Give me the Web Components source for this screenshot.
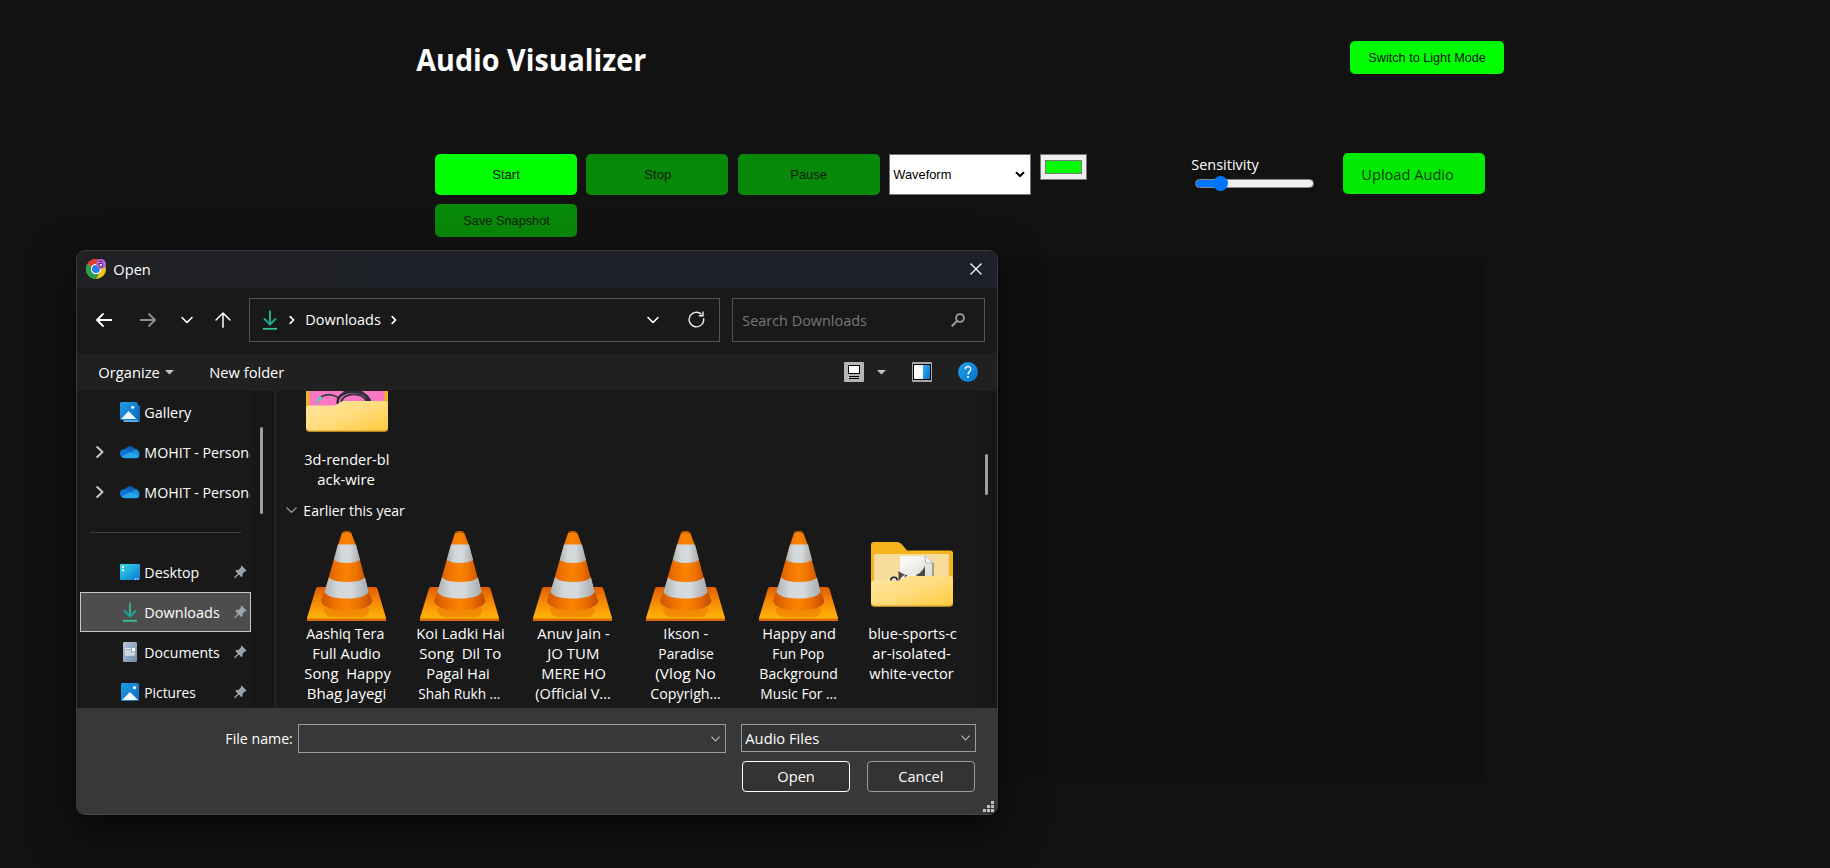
<!DOCTYPE html>
<html lang="en">
<head>
<meta charset="utf-8">
<title>Audio Visualizer</title>
<style>
html,body{margin:0;height:868px;overflow:hidden;background:#121212}
body{font-family:"Open Sans","Noto Sans",sans-serif;color:#fff;position:relative}
</style>
</head>
<body>
<visualizer-page></visualizer-page>
<open-dialog></open-dialog>
<script>
const define=(name,css,html,setup)=>{
  customElements.define(name,class extends HTMLElement{
    connectedCallback(){
      if(this.shadowRoot)return;
      const root=this.attachShadow({mode:'open'});
      root.innerHTML='<style>:host,*{box-sizing:border-box}'+css+'</style>'+(typeof html==='function'?html(this):html);
      if(setup)setup(this,root);
    }
  });
};

/* Text set to an exact width in pixels (w). */
const fitters=[];
define('fit-text',
  ':host{display:inline-block;white-space:pre;line-height:20px;flex:none;text-align:left}span{display:inline-block;transform-origin:0 50%}',
  '<span><slot></slot></span>',
  (el,root)=>{
    fitters.push(()=>{
      const s=root.querySelector('span'),w=+el.getAttribute('w'),nat=s.getBoundingClientRect().width;
      if(!nat||!w)return;
      el.style.width=w+'px';
      s.style.transform='scaleX('+(w+1.5)/nat+') translateX(-.7px)';
    });
  });

const stroke=(d,c,w,x='')=>`<path d="${d}" fill="none" stroke="${c}" stroke-width="${w}" ${x}/>`;
const round='stroke-linecap="round" stroke-linejoin="round"';
const folder=(inner)=>`
<defs><linearGradient id="f" x1="0" y1="0" x2="1" y2="1"><stop offset="0" stop-color="#ffe6a0"/><stop offset=".5" stop-color="#ffdc7c"/><stop offset="1" stop-color="#ffc93a"/></linearGradient>
<linearGradient id="p" x1="0" y1="0" x2="1" y2="1"><stop offset="0" stop-color="#fff"/><stop offset="1" stop-color="#d5d5cf"/></linearGradient></defs>
<path d="M0 3a3 3 0 0 1 3-3H26q3 0 5 2.500L36 8.500H79a3 3 0 0 1 3 3V61H0z" fill="#f5b31c"/>${inner}
<path d="M0 41.500a3 3 0 0 1 3-3H27q3 0 5.500-2l2-1.500q2-1 4-1H79a3 3 0 0 1 3 3V61.500a3 3 0 0 1-3 3H3a3 3 0 0 1-3-3z" fill="url(#f)"/>
<path d="M.5 61.500a3 3 0 0 0 2.500 2.500H79a3 3 0 0 0 2.500-2.500" fill="none" stroke="#d99a1c" stroke-width="1"/>`;
const dl=stroke('M7 .5V14','#2fb98a',1.8)+stroke('M1.500 9 7 14.500 12.500 9','#19a99a',1.900,round)+stroke('M0 18.800H14','#34c48d',1.800);
const picture=`<defs><linearGradient id="g" x1="0" y1="0" x2="1" y2="1"><stop offset="0" stop-color="#1d9fe6"/><stop offset="1" stop-color="#0f69c4"/></linearGradient></defs>`;
const ICONS={
chrome:[20,20,`<circle cx="10" cy="10" r="10" fill="#fbc116"/><path d="M10 10 1.340 5A10 10 0 0 1 18.660 5H10z" fill="#e33b2e"/><path d="M10 10 1.340 5A10 10 0 0 0 10 20L14.330 12.500z" fill="#2a9e4b"/><path d="M10 5H18.660L16 9z" fill="#e33b2e"/><circle cx="10" cy="10" r="5.200" fill="#fff"/><circle cx="10" cy="10" r="4" fill="#2b7de9"/><circle cx="15" cy="5" r="5" fill="#b565dd"/><path d="M13.300 2.300h3M13 4.500h3.500v3.300h-3z" fill="#fff" fill-opacity=".75" stroke="#4b3157" stroke-width="1"/>`],
close:[12,12,stroke('M.5.5 11.500 11.500M11.500.5.5 11.500','#fff',1.200)],
back:[16,14,stroke('M15.300 7H1.500M7 1 1 7 7 13','#fff',1.800,round)],
forward:[16,14,stroke('M.7 7H14.500M9 1 15 7 9 13','#8f8f8f',1.800,round)],
down:[12,8,stroke('M1 1.500 6 6.500 11 1.500','#fff',1.600,round)],
up:[16,16,stroke('M8 15.300V1.200M1 8 8 1 15 8','#fff',1.500,round)],
dl:[14,20,dl],
right:[6,10,stroke('M1.200 1.600 4.600 5 1.200 8.400','#fff',1.700,round)],
expand:[8,12,stroke('M1.200 1 6.500 6 1.200 11','#c8c8c8',2,round)],
refresh:[17,17,stroke('M13.500 3.300A7.300 7.300 0 1 0 15.600 7.300','#eee',1.400)+stroke('M15 .5V4.700H10.800','#eee',1.400)],
search:[14,14,`<circle cx="9" cy="5" r="3.900" fill="none" stroke="#a0a0a0" stroke-width="1.800"/>`+stroke('M6 8 .8 13.200','#a0a0a0',2)],
tri:[9,5,`<path d="M0 0H9L4.500 4.500z" fill="#c4c4c4"/>`],
view:[20,20,`<rect width="20" height="20" rx="1" fill="#b5b5b5"/><rect x="4.500" y="3.500" width="11" height="8" fill="#fff" stroke="#000"/><path d="M5 14.500H15M5 16.500H15" stroke="#000"/>`],
pane:[20,20,`<defs><linearGradient id="g" x1="0" y1="0" x2="1" y2="1"><stop offset="0" stop-color="#2cb0f0"/><stop offset="1" stop-color="#0a73cf"/></linearGradient></defs><rect width="20" height="20" rx="1" fill="#a8a8a8"/><rect x="1.500" y="2.500" width="17" height="15" fill="#fff" stroke="#000"/><rect x="11" y="3" width="7" height="14" fill="url(#g)"/>`],
help:[20,20,`<defs><linearGradient id="g" x1="0" y1="0" x2="1" y2="1"><stop offset="0" stop-color="#22a4ee"/><stop offset="1" stop-color="#0470cd"/></linearGradient></defs><circle cx="10" cy="10" r="10" fill="url(#g)"/>`+stroke('M7.300 7.200a2.700 2.700 0 1 1 4.600 1.900C10.600 10.200 10 10.700 10 12.500','#fff',1.400)+`<circle cx="10" cy="15" r="1" fill="#fff"/>`],
gallery:[20,20,picture+`<rect x="3" y="3" width="17" height="17" rx="1.500" fill="#1467b8"/><path d="M3.500 18.300H18V20H5q-1.500 0-1.500-1.700z" fill="#6fb3ea"/><rect width="17.600" height="18" rx="1.500" fill="url(#g)"/><path d="M1 17 8.500 9 16.500 17z" fill="#e9f5ff"/><circle cx="12.700" cy="5.300" r="1.500" fill="#fff"/>`],
pictures:[18,18,picture+`<rect width="18" height="18" rx="1.500" fill="url(#g)"/><path d="M1 17 9 9 17 17z" fill="#f4faff"/><circle cx="13.500" cy="4.700" r="1.600" fill="#fff"/>`],
cloud:[20,14,`<path d="M4.500 4.500A6.500 6.500 0 0 1 15.500 4L11 9z" fill="#0a5db0"/><path d="M4 13A4.200 4.200 0 0 1 4.500 4.200Q7 3.500 9 5L15 9 6 13z" fill="#0f74cf"/><path d="M12 7Q13.500 4 16 4.200A4.300 4.300 0 0 1 18 11.500z" fill="#1b8ddf"/><path d="M3.500 13Q1.500 12.500 1.500 11.500L11 6.800 19.500 10.500Q19 13 16.500 13.200H4.500z" fill="#26a4ec"/>`],
desktop:[20,16,`<defs><linearGradient id="g" x1="0" y1="0" x2="1" y2="1"><stop offset="0" stop-color="#35dbe8"/><stop offset="1" stop-color="#0b74d0"/></linearGradient></defs><rect width="20" height="16" rx="1.200" fill="url(#g)"/><path d="M2 2h2v2h-2zM2 5.300h2v2h-2zM15 14.500h1.200v1.200h-1.200zM17 14.500h1.200v1.200h-1.200z" fill="#fff"/>`],
documents:[14,20,`<defs><linearGradient id="g" x1="0" y1="0" x2="1" y2="1"><stop offset="0" stop-color="#b4c5d8"/><stop offset="1" stop-color="#6f8cab"/></linearGradient></defs><rect width="14" height="20" rx="1.200" fill="url(#g)"/><path d="M2 6.700H8M2 9.200H8M2 11.200H12" stroke="#fff" stroke-width="1"/><path d="M9 6h3v3.500h-3z" fill="#fff"/><path d="M2 13H12" stroke="#fff" stroke-width="1"/>`],
pin:[13,14,`<path d="M7.500.5 12.500 5.500 11.500 6.500 10.800 6.300 8.700 8.700 8.500 11.200 7.500 12.300 4.800 9.500 1 13.300.3 13 .3 12.300 3.800 8.500 1.200 5.900 2.200 4.900 4.800 4.700 7 2.400 6.700 1.500z" fill="#9aa4ab"/>`],
group:[11,6,stroke('M.5.500 5.500 5.300 10.500.5','#9a9a9a',1.200)],
combo:[9,6,stroke('M.5.700 4.500 5 8.500.7','#c4c4c4',1.100)],
grip:[11,11,`<path d="M8 0h3v3h-3zM8 4h3v3h-3zM4 4h3v3h-3zM8 8h3v3h-3zM4 8h3v3h-3zM0 8h3v3h-3z" fill="#c2c2c2"/>`],
cone:[79,90,`<defs><linearGradient id="o" x1="0" x2="1"><stop offset="0" stop-color="#cf5400"/><stop offset=".28" stop-color="#f07300"/><stop offset=".5" stop-color="#fa8302"/><stop offset=".7" stop-color="#ef7400"/><stop offset="1" stop-color="#c24b00"/></linearGradient>
<linearGradient id="w" x1="0" x2="1"><stop offset="0" stop-color="#a2a7a9"/><stop offset=".3" stop-color="#cdd3d5"/><stop offset=".6" stop-color="#d0d5d8"/><stop offset="1" stop-color="#9ca0a2"/></linearGradient>
<pattern id="d" width="2" height="2" patternUnits="userSpaceOnUse"><path d="M0 0h1v1h-1zM1 1h1v1h-1z" fill="#fff" opacity=".22"/></pattern>
<linearGradient id="b" x1="0" y1="0" x2="0" y2="1"><stop offset="0" stop-color="#e05c00"/><stop offset=".45" stop-color="#f68b05"/><stop offset="1" stop-color="#ffbb08"/></linearGradient></defs>
<path d="M11 56H68Q70 56 70.500 58L79 87V89Q79 90 78 90H1Q0 90 0 89V87L8.800 58Q9.300 56 11 56z" fill="url(#b)"/>
<path d="M0 87.500H79V89Q79 90 78 90H1Q0 90 0 89z" fill="#e06a05"/>
<path d="M17 77H62Q63 84 56 86H24Q17 85 17 77z" fill="#ee7d05" opacity=".65"/>
<path d="M17.500 60 14 70Q16 79 39.500 79.500 63 79 65.500 70L61.500 60z" fill="url(#o)"/>
<path d="M35 2Q35.500 0 39.500 0T44.300 2L49 14.500 61.500 61Q58 67.500 39.500 67.500 21 67.500 17.500 61L31 14z" fill="url(#o)"/>
<path id="u" d="M31 13.500H49L53 29Q49 32 40 32 31 32 26.800 29z" fill="url(#w)"/><path d="M31 13.500H49L53 29Q49 32 40 32 31 32 26.800 29z" fill="url(#d)"/>
<path d="M22 46.500Q27 51 40 51 53 51 58 46.500L61.700 61Q58 67.500 39.500 67.500 21 67.500 17.300 61z" fill="url(#w)"/><path d="M22 46.500Q27 51 40 51 53 51 58 46.500L61.700 61Q58 67.500 39.500 67.500 21 67.500 17.300 61z" fill="url(#d)"/>
<path d="M35.500 2Q39.500-.5 44 2" fill="none" stroke="#9e4a0c" stroke-width="1.200"/>`],
folderWire:[82,65,folder(`<rect x="3.500" y="-2" width="75" height="50" fill="#f977c3"/><path d="M15 30Q20 26.500 26 28T32 31.500" fill="none" stroke="#32383e" stroke-width="1.800"/><path d="M10 37 13 33" stroke="#9aa3a3" stroke-width="2.500"/><path d="M12.500 33.500 15 30" stroke="#58d0b8" stroke-width="3.200"/><path d="M32 37C30 29 39 24 49 25 59 25.500 64 31 65 38" fill="none" stroke="#2b2932" stroke-width="2.400"/><path d="M35 37C35 29 44 26.500 51 27.500 58 28.500 61 33 61.500 38M37 26Q46 20 55 24.500 61 28 62.500 36" fill="none" stroke="#33323b" stroke-width="2"/>`)],
folderCar:[82,65,folder(`<path d="M3 13a1 1 0 0 1 1-1H78V40H3z" fill="#f7dc9c"/><path d="M29 14H56L62 20V40H29z" fill="url(#p)"/><path d="M54 14 62 21H54.500z" fill="#fbfbfb" stroke="#aaa79d" stroke-width=".8"/><path d="M62 21v19" stroke="#8e897c" stroke-width="1.500"/><path d="M27.500 29Q34 34 41 34 50 33 54 24V40H27.500z" fill="#4b493f"/><circle cx="23" cy="38.500" r="3.200" fill="#ddd" stroke="#1e1e1e" stroke-width="1.500"/><path d="M28 40Q30 34 34 33L33 40z" fill="#eee"/><ellipse cx="41" cy="37" rx="7" ry="4.500" fill="#f6f6f6"/>`)]
};
define('ui-icon',':host{display:block;flex:none}svg{display:block;overflow:visible}',el=>{
  const [w,h,body]=ICONS[el.getAttribute('name')];
  return `<svg width="${w}" height="${h}" viewBox="0 0 ${w} ${h}">${body}</svg>`;
});

define('green-button',`:host{display:flex;align-items:center;justify-content:center;height:33px;border-radius:5px;background:#0f0;color:#121212;font:13.333px/20px "Liberation Sans",Arial,sans-serif}
:host([tall]){height:41px}:host([off]){background:#098909;color:#111c11}
:host([upload]){background:#02ea02;color:#083c0c;font:15px/20px "Open Sans",sans-serif;justify-content:flex-start;padding-left:19px;margin-top:-1px}`,'<slot></slot>');

define('control-grid',`:host{display:grid;grid-template-columns:repeat(7,142px);column-gap:9.350px;row-gap:9px;align-items:start}
.select{height:41px;border:1px solid #767676;background:#fff;color:#000;display:flex;align-items:center;justify-content:space-between;padding:0 5px 0 3.500px;font:13.333px/20px "Liberation Sans",Arial,sans-serif}
.swatch{width:47px;height:26px;border:1px solid #767676;background:#efefef;padding:5px 4px}.swatch i{display:block;height:14px;background:#0f0;border:1px solid #777}
.sens{font-size:14.500px;display:flex;flex-direction:column;padding-top:1px}
.track{margin:4px 0 0 3px;width:119px;height:9px;border-radius:5px;border:1px solid #8b8b8b;background:linear-gradient(90deg,#0075ff 26px,#efefef 26px);display:flex;align-items:center}
.track i{display:block;flex:none;width:15px;height:15px;border-radius:50%;background:#0075ff;margin-left:17.500px}`,
`<green-button tall><fit-text w="26">Start</fit-text></green-button>
<green-button tall off><fit-text w="25.500">Stop</fit-text></green-button>
<green-button tall off><fit-text w="35">Pause</fit-text></green-button>
<div class="select"><fit-text w="56.500">Waveform</fit-text><svg width="10" height="7" viewBox="0 0 10 7"><path d="M1 1.200 5 5 9 1.200" fill="none" stroke="#000" stroke-width="2"/></svg></div>
<div class="swatch"><i></i></div>
<div class="sens"><fit-text w="66">Sensitivity</fit-text><div class="track"><i></i></div></div>
<green-button tall upload><fit-text w="91">Upload Audio</fit-text></green-button>
<green-button off><fit-text w="85">Save Snapshot</fit-text></green-button>`);

define('visualizer-page',`:host{display:block;height:868px;padding:41px 326px 0 417px}
header{display:flex;justify-content:space-between;align-items:flex-start;height:113px}
h1{margin:-1px 0 0;font-size:29.500px;font-weight:700;line-height:40px}h1 fit-text{line-height:40px}
green-button.mode{width:154px}control-grid{margin-left:18px}
.canvas{margin:20px 19px 0 18px;height:523px;background:#101010}`,
`<header><h1><fit-text w="228.500">Audio Visualizer</fit-text></h1><green-button class="mode"><fit-text w="116">Switch to Light Mode</fit-text></green-button></header>
<control-grid></control-grid><div class="canvas"></div>`);

define('title-bar',':host{display:flex;align-items:center;height:37px;padding:0 15px 2px 9px;background:linear-gradient(90deg,#202124,#1e2129 45%)}fit-text{margin:1px auto 0 7.500px}',
'<ui-icon name="chrome"></ui-icon><fit-text w="36">Open</fit-text><ui-icon name="close"></ui-icon>');

define('nav-bar',`:host{display:flex;height:65px;padding:10px 12px 11px 19px;align-items:center}
.box{height:44px;border:1px solid #535353;display:flex;align-items:center}
.path{width:471px;margin:0 12px 0 18.500px;padding:0 14px 1px 13px}.path fit-text{margin-top:-1px}.find{width:253px;padding:0 19px 0 9.500px;justify-content:space-between;color:#787878}`,
`<ui-icon name="back"></ui-icon><ui-icon name="forward" style="margin-left:28px"></ui-icon><ui-icon name="down" style="margin:-1px 0 0 24.500px"></ui-icon><ui-icon name="up" style="margin-left:22px"></ui-icon>
<div class="box path"><ui-icon name="dl"></ui-icon><ui-icon name="right" style="margin:0 11px 0 12px"></ui-icon><fit-text w="74">Downloads</fit-text><ui-icon name="right" style="margin-left:11px"></ui-icon><ui-icon name="down" style="margin:0 29px 0 auto"></ui-icon><ui-icon name="refresh"></ui-icon></div>
<div class="box find"><fit-text w="123">Search Downloads</fit-text><ui-icon name="search"></ui-icon></div>`);

define('command-bar',':host{display:flex;align-items:center;height:38px;padding:0 19px 0 22px;background:#202020}',
`<fit-text w="60">Organize</fit-text><ui-icon name="tri" style="margin:0 35.500px 0 6px"></ui-icon><fit-text w="73.500">New folder</fit-text>
<ui-icon name="view" style="margin-left:auto"></ui-icon><ui-icon name="tri" style="margin:0 26px 0 13px"></ui-icon><ui-icon name="pane"></ui-icon><ui-icon name="help" style="margin-left:26px"></ui-icon>`);

define('side-item',`:host{display:flex;align-items:center;height:40px;width:171px;overflow:hidden;border:1px solid transparent}
:host([selected]){background:#4d4d4d;border-color:#c8c8c8}
.ex{width:8px;margin-left:14.500px;flex:none}.ic{width:20px;margin:0 5px 0 16px;flex:none;display:flex;justify-content:center}ui-icon.pin{margin:0 3px 0 auto}.t{flex:1;display:flex;align-items:center;height:24px;min-width:0}`,
el=>`<div class="ex">${el.hasAttribute('expand')?'<ui-icon name="expand"></ui-icon>':''}</div><div class="ic"><ui-icon name="${el.getAttribute('icon')}"></ui-icon></div><div class="t"><fit-text w="${el.getAttribute('w')}">${el.getAttribute('label')}</fit-text>${el.hasAttribute('pin')?'<ui-icon class="pin" name="pin"></ui-icon>':''}</div>`);

define('side-pane',`:host{display:flex;width:197px;flex:none;padding-left:3px;overflow:hidden;border-right:1px solid #131313}
.list{width:171px;margin-top:1px}hr{border:0;height:1px;background:#3e3e3e;margin:20px 10px 19px}
.bar{flex:1;background:#171717;padding:36px 0 0 9px}.bar i{display:block;width:3px;height:87px;border-radius:2px;background:#9f9f9f}`,
`<div class="list"><side-item icon="gallery" label="Gallery" w="45.500"></side-item><side-item expand icon="cloud" label="MOHIT - Persona" w="111"></side-item><side-item expand icon="cloud" label="MOHIT - Persona" w="111"></side-item><hr>
<side-item pin icon="desktop" label="Desktop" w="53.500"></side-item><side-item pin selected icon="dl" label="Downloads" w="74"></side-item><side-item pin icon="documents" label="Documents" w="74"></side-item><side-item pin icon="pictures" label="Pictures" w="50"></side-item></div><div class="bar"><i></i></div>`);

define('file-tile',':host{display:flex;flex-direction:column;align-items:center;width:113px;flex:none}.ic{height:92px;display:flex;align-items:flex-start}',
el=>`<div class="ic"><ui-icon name="${el.getAttribute('icon')}" style="margin-top:${el.getAttribute('icon')==='cone'?0:10.500}px"></ui-icon></div>`+
el.getAttribute('lines').split('|').map(l=>{const [t,w,dx]=l.split('~');return `<fit-text w="${w}" style="margin-left:${dx||0}px">${t}</fit-text>`}).join(''));

define('file-pane',`:host{display:flex;flex:1;overflow:hidden;border-left:3px solid #212121}
.files{width:700px;height:317px;overflow:hidden;display:flex;flex-direction:column}
.row{display:flex;padding-left:13px}.row.one{margin-top:-34.500px;height:140px;flex:none}
.group{display:flex;align-items:center;height:20px;padding-left:9px;margin-top:3.500px;flex:none}.group fit-text{margin-left:6.500px}
.row.two{margin-top:11px}.bar{flex:1;background:#171717;padding:63px 0 0 8px}.bar i{display:block;width:3px;height:41px;border-radius:2px;background:#9f9f9f}`,
`<div class="files"><div class="row one"><file-tile icon="folderWire" lines="3d-render-bl~83.500|ack-wire~56~-1"></file-tile></div>
<div class="group"><ui-icon name="group"></ui-icon><fit-text w="100">Earlier this year</fit-text></div>
<div class="row two">
<file-tile icon="cone" lines="Aashiq Tera~76.500~-3|Full Audio~67|Song  Happy~85~1|Bhag Jayegi~78"></file-tile>
<file-tile icon="cone" lines="Koi Ladki Hai~87~1|Song  Dil To~80.500~1|Pagal Hai~62~-3|Shah Rukh ...~80.500"></file-tile>
<file-tile icon="cone" lines="Anuv Jain -~71~1|JO TUM~50.500~1|MERE HO~63~2|(Official V...~74"></file-tile>
<file-tile icon="cone" lines="Ikson -~43.500|Paradise~54~1|(Vlog No~59|Copyrigh...~69"></file-tile>
<file-tile icon="cone" lines="Happy and~72|Fun Pop~50.500|Background~77|Music For ...~75"></file-tile>
<file-tile icon="folderCar" lines="blue-sports-c~87~1|ar-isolated-~77|white-vector~83"></file-tile></div></div>
<div class="bar"><i></i></div>`);

define('dialog-footer',`:host{display:block;height:107px;background:#383838;padding:16px 21px 0 0}
.r{display:flex;justify-content:flex-end;align-items:flex-start}.combo{height:29px;border:1px solid #9b9b9b;display:flex;align-items:center;justify-content:space-between;padding:0 5px 0 4px}
.name{width:428px;margin:0 15px 0 6px;justify-content:flex-end}.filter{width:235px;height:28px;background:#333}
.btn{width:108px;height:31px;border:1px solid #9a9a9a;border-radius:4px;background:#333;display:flex;align-items:center;justify-content:center;padding-bottom:1px}
.btn.main{border-color:#fff;margin-right:17px}.b{margin-top:8px;padding-right:1px}
.g{display:flex;justify-content:flex-end;margin:9px -18px 0 0}`,
`<div class="r"><fit-text w="66" style="margin-top:4px">File name:</fit-text><div class="combo name"><ui-icon name="combo"></ui-icon></div><div class="combo filter"><fit-text w="72.500">Audio Files</fit-text><ui-icon name="combo"></ui-icon></div></div>
<div class="r b"><div class="btn main"><fit-text w="36">Open</fit-text></div><div class="btn"><fit-text w="43.500">Cancel</fit-text></div></div><div class="g"><ui-icon name="grip"></ui-icon></div>`);

define('open-dialog',`:host{position:absolute;left:76px;top:250px;width:922px;height:565px;border:1px solid #3b3b3b;border-bottom-color:#444;border-radius:9px;overflow:hidden;background:#191919;font-size:15px;box-shadow:0 0 3px rgba(0,0,0,.4),0 16px 44px rgba(0,0,0,.6)}
.body{display:flex;height:317px}`,
'<title-bar></title-bar><nav-bar></nav-bar><command-bar></command-bar><div class="body"><side-pane></side-pane><file-pane></file-pane></div><dialog-footer></dialog-footer>');
fitters.forEach(f=>f());
</script>
</body>
</html>
